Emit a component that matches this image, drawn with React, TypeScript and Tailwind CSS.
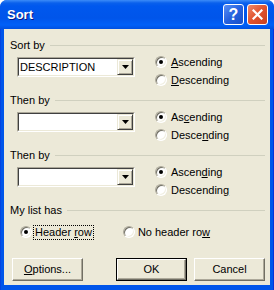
import React from "react";

function Radio({ checked }: { checked?: boolean }) {
  return (
    <span className="relative w-[12px] h-[12px] shrink-0 rounded-full bg-white border border-t-[#ACA899] border-l-[#ACA899] border-b-white border-r-white shadow-[inset_1px_1px_0_#716F64,inset_-1px_-1px_0_#F1EFE2] flex items-center justify-center">
      {checked && <span className="w-[4px] h-[4px] rounded-full bg-black" />}
    </span>
  );
}

function RadioRow({ checked, children }: { checked?: boolean; children: React.ReactNode }) {
  return (
    <div className="h-[18px] flex items-center">
      <Radio checked={checked} />
      <span className="ml-[4px] leading-none">{children}</span>
    </div>
  );
}

function Combo({ value }: { value?: string }) {
  return (
    <div className="mt-[5px] w-[118px] h-[20px] border border-t-[#ACA899] border-l-[#ACA899] border-b-white border-r-white">
      <div className="w-full h-full border border-t-[#404040] border-l-[#404040] border-b-[#ECE9D8] border-r-[#ECE9D8] bg-white flex">
        <div className="flex-1 flex items-center pl-[1px] leading-none">{value}</div>
        <div className="w-[16px] h-[16px] bg-[#ECE9D8] border border-t-[#ECE9D8] border-l-[#ECE9D8] border-b-[#404040] border-r-[#404040] shadow-[inset_1px_1px_0_#FFFFFF,inset_-1px_-1px_0_#ACA899] flex items-center justify-center">
          <svg width="7" height="4" viewBox="0 0 7 4">
            <path d="M0 0H7L3.5 4Z" fill="#000" />
          </svg>
        </div>
      </div>
    </div>
  );
}

function Header({ label }: { label: React.ReactNode }) {
  return (
    <div className="h-[14px] flex items-center pl-[6px] pr-[5px]">
      <span className="leading-none">{label}</span>
      <div className="flex-1 ml-[5px] h-[1px] bg-[#D0D0BF]" />
    </div>
  );
}

function SortSection({
  label,
  value,
  asc,
  desc,
}: {
  label: string;
  value?: string;
  asc: React.ReactNode;
  desc: React.ReactNode;
}) {
  return (
    <div className="flex flex-col">
      <Header label={label} />
      <div className="h-[41px] flex pl-[13px]">
        <Combo value={value} />
        <div className="ml-[20px] pt-[1px] flex flex-col">
          <RadioRow checked>{asc}</RadioRow>
          <RadioRow>{desc}</RadioRow>
        </div>
      </div>
    </div>
  );
}

function Btn({ children, def }: { children: React.ReactNode; def?: boolean }) {
  if (def) {
    return (
      <div className="w-[71px] h-[23px] border border-black bg-[#ECE9D8]">
        <div className="w-full h-full border border-t-white border-l-white border-b-[#716F64] border-r-[#716F64] shadow-[inset_-1px_-1px_0_#ACA899] flex items-center justify-center leading-none">
          {children}
        </div>
      </div>
    );
  }
  return (
    <div className="w-[71px] h-[23px] bg-[#ECE9D8] border border-t-white border-l-white border-b-[#716F64] border-r-[#716F64] shadow-[inset_-1px_-1px_0_#ACA899] flex items-center justify-center leading-none">
      {children}
    </div>
  );
}

export default function App() {
  return (
    <div className="w-[274px] h-[290px] bg-white font-['Liberation_Sans',Arial,sans-serif] text-[11px] text-black">
      <div className="w-full h-full flex flex-col rounded-t-[7px] overflow-hidden bg-[#0054E3]">
        {/* title bar */}
        <div className="h-[29px] shrink-0 flex items-center pl-[7px] pr-[6px] bg-[linear-gradient(to_bottom,#3C8CF8_0px,#0A60EC_3px,#0058EE_6px,#0055EA_18px,#0060F8_25px,#0050E0_29px)]">
          <span className="flex-1 text-white font-bold text-[13px] leading-none [text-shadow:1px_1px_0_#0A1883]">
            Sort
          </span>
          <div className="w-[21px] h-[21px] rounded-[3px] border border-white bg-[linear-gradient(135deg,#5A8FF5,#2561DE_50%,#1A4FC8)] flex items-center justify-center text-white font-bold text-[16px] leading-none">
            ?
          </div>
          <div className="ml-[3px] w-[21px] h-[21px] rounded-[3px] border border-white bg-[linear-gradient(135deg,#F08A6A,#E0522E_50%,#C8401E)] flex items-center justify-center">
            <svg width="11" height="11" viewBox="0 0 11 11">
              <path d="M1.5 1.5L9.5 9.5M9.5 1.5L1.5 9.5" stroke="#fff" strokeWidth="2.2" strokeLinecap="square" />
            </svg>
          </div>
        </div>
        {/* body */}
        <div className="flex-1 flex px-[4px] pb-[5px] bg-[linear-gradient(to_right,#0831D9_0px,#0055EA_1px,#0055EA_273px,#0831D9_273px)]">
          <div className="flex-1 bg-[#ECE9D8] flex flex-col pt-[9px]">
            <SortSection
              label="Sort by"
              value="DESCRIPTION"
              asc={<><u>A</u>scending</>}
              desc={<><u>D</u>escending</>}
            />
            <SortSection
              label="Then by"
              asc={<>As<u>c</u>ending</>}
              desc={<>Desce<u>n</u>ding</>}
            />
            <SortSection
              label="Then by"
              asc={<>Ascen<u>d</u>ing</>}
              desc={<>Descendin<u>g</u></>}
            />
            <div className="flex flex-col">
              <Header label="My list has" />
              <div className="mt-[6px] h-[18px] flex items-center pl-[16px]">
                <Radio checked />
                <span className="ml-[1px] border border-dotted border-black px-[1px] leading-none py-[1px]">
                  Header <u>r</u>ow
                </span>
                <span className="ml-[29px]">
                  <Radio />
                </span>
                <span className="ml-[3px] leading-none">
                  No header ro<u>w</u>
                </span>
              </div>
            </div>
            <div className="mt-[17px] flex pl-[8px]">
              <Btn>
                <span>
                  <u>O</u>ptions...
                </span>
              </Btn>
              <div className="ml-[33px]">
                <Btn def>OK</Btn>
              </div>
              <div className="ml-[7px]">
                <Btn>Cancel</Btn>
              </div>
            </div>
          </div>
        </div>
      </div>
    </div>
  );
}
